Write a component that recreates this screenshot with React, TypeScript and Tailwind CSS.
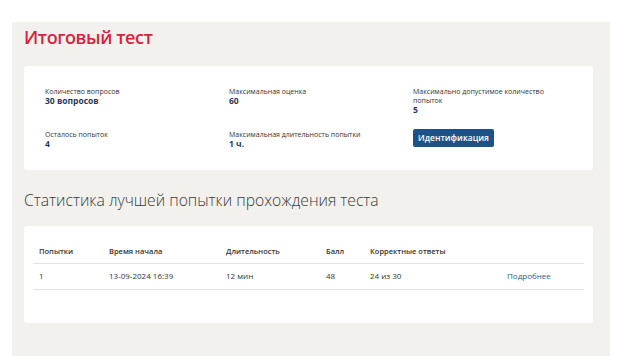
const info = [
  { label: "Количество вопросов", value: "30 вопросов" },
  { label: "Максимальная оценка", value: "60" },
  { label: "Максимально допустимое количество попыток", value: "5" },
  { label: "Осталось попыток", value: "4" },
  { label: "Максимальная длительность попытки", value: "1 ч." },
];

const rows = [
  { attempt: "1", start: "13-09-2024 16:39", duration: "12 мин", score: "48", correct: "24 из 30" },
];

export default function App() {
  return (
    <div className="w-[622px] h-[358px] bg-white pt-[22px] pl-3 pr-3 font-['Open_Sans',sans-serif]">
      <div className="bg-[#f2f1ee] h-[334px] px-3 pt-[3px]">
        <h1 className="text-[18px] leading-[24px] font-semibold text-[#d7223e] tracking-[-0.4px]">
          Итоговый тест
        </h1>
        <div className="mt-[17px] w-[569px] h-[104px] bg-white rounded-[3px] pl-[21px] pt-[21px]">
          <div className="grid grid-cols-[184px_184px_160px] gap-y-[13px]">
            {info.slice(0, 3).map((item) => (
              <div key={item.label} className="flex flex-col">
                <span className="text-[7px] leading-[9px] text-[#333] max-w-[140px]">{item.label}</span>
                <span className="text-[8.5px] leading-[10px] font-bold text-[#1f3a5f]">{item.value}</span>
              </div>
            ))}
            {info.slice(3).map((item) => (
              <div key={item.label} className="flex flex-col pt-[2px]">
                <span className="text-[7px] leading-[9px] text-[#333]">{item.label}</span>
                <span className="text-[8.5px] leading-[10px] font-bold text-[#1f3a5f]">{item.value}</span>
              </div>
            ))}
            <div>
              <button className="block mt-[1px] w-[81px] h-[18px] rounded-[2px] bg-[#1d5288] text-white text-[8.5px] font-semibold leading-[18px]">
                Идентификация
              </button>
            </div>
          </div>
        </div>
        <h2 className="mt-[19px] text-[15.7px] leading-[22px] text-[#3a3a3a] font-light">
          Статистика лучшей попытки прохождения теста
        </h2>
        <div className="mt-[15px] w-[569px] h-[97px] bg-white rounded-[3px] px-[9px] pt-[14px]">
          <table className="w-[551px] text-left border-collapse">
            <thead>
              <tr className="border-b border-[#e3e3e3] h-[23px]">
                <th className="w-[76px] pl-[6px] text-[7.5px] font-semibold text-[#333]">Попытки</th>
                <th className="w-[117px] text-[7.5px] font-semibold text-[#333]">Время начала</th>
                <th className="w-[100px] text-[7.5px] font-semibold text-[#333]">Длительность</th>
                <th className="w-[44px] text-[7.5px] font-semibold text-[#333]">Балл</th>
                <th className="w-[137px] text-[7.5px] font-semibold text-[#333]">Корректные ответы</th>
                <th></th>
              </tr>
            </thead>
            <tbody>
              {rows.map((r) => (
                <tr key={r.attempt} className="border-b border-[#e3e3e3] h-[26px] text-[8px] text-[#333]">
                  <td className="pl-[6px]">{r.attempt}</td>
                  <td>{r.start}</td>
                  <td>{r.duration}</td>
                  <td>{r.score}</td>
                  <td>{r.correct}</td>
                  <td className="text-[#2f5e8d]">Подробнее</td>
                </tr>
              ))}
            </tbody>
          </table>
        </div>
      </div>
    </div>
  );
}
